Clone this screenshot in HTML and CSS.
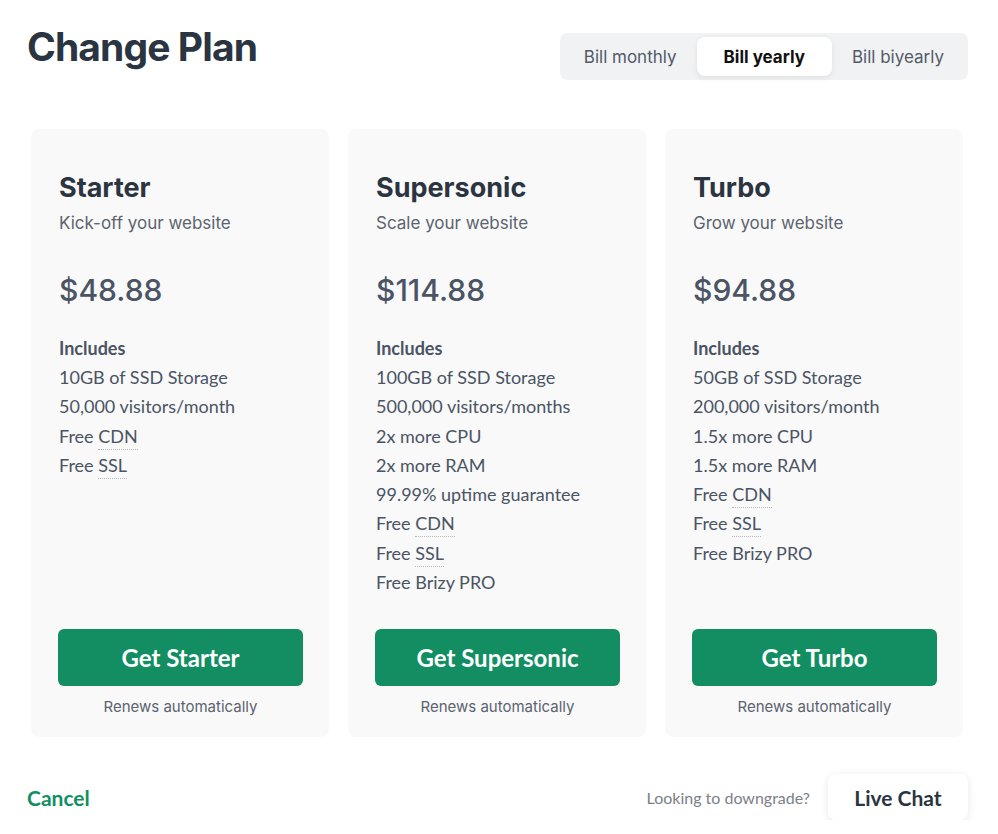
FILE: index.html
```html
<!DOCTYPE html>
<html>
<head>
    <meta charset="utf-8" />
    <meta name="viewport" content="width=device-width, initial-scale=1" />
    <title>Change Plan</title>
    <link rel="stylesheet" href="styles.css">
</head>
<body>
    <div class="page">
        <div class="header">
            <h1>Change Plan</h1>
            <div class="toggle">
                <button class="toggle-item">Bill monthly</button>
                <button class="toggle-item active">Bill yearly</button>
                <button class="toggle-item">Bill biyearly</button>
            </div>
        </div>

        <div class="cards">
            <div class="card">
                <h2>Starter</h2>
                <div class="subtitle">Kick-off your website</div>
                <div class="price">$48.88</div>
                <div class="includes">Includes</div>
                <ul class="features">
                    <li>10GB of SSD Storage</li>
                    <li>50,000 visitors/month</li>
                    <li>Free <span class="hint">CDN</span></li>
                    <li>Free <span class="hint">SSL</span></li>
                </ul>
                <button class="get">Get Starter</button>
                <div class="renews">Renews automatically</div>
            </div>

            <div class="card">
                <h2>Supersonic</h2>
                <div class="subtitle">Scale your website</div>
                <div class="price">$114.88</div>
                <div class="includes">Includes</div>
                <ul class="features">
                    <li>100GB of SSD Storage</li>
                    <li>500,000 visitors/months</li>
                    <li>2x more CPU</li>
                    <li>2x more RAM</li>
                    <li>99.99% uptime guarantee</li>
                    <li>Free <span class="hint">CDN</span></li>
                    <li>Free <span class="hint">SSL</span></li>
                    <li>Free Brizy PRO</li>
                </ul>
                <button class="get">Get Supersonic</button>
                <div class="renews">Renews automatically</div>
            </div>

            <div class="card">
                <h2>Turbo</h2>
                <div class="subtitle">Grow your website</div>
                <div class="price">$94.88</div>
                <div class="includes">Includes</div>
                <ul class="features">
                    <li>50GB of SSD Storage</li>
                    <li>200,000 visitors/month</li>
                    <li>1.5x more CPU</li>
                    <li>1.5x more RAM</li>
                    <li>Free <span class="hint">CDN</span></li>
                    <li>Free <span class="hint">SSL</span></li>
                    <li>Free Brizy PRO</li>
                </ul>
                <button class="get">Get Turbo</button>
                <div class="renews">Renews automatically</div>
            </div>
        </div>

        <div class="footer">
            <a class="cancel" href="#">Cancel</a>
            <div class="downgrade">
                <span>Looking to downgrade?</span>
                <button class="chat">Live Chat</button>
            </div>
        </div>
    </div>
</body>
</html>
```

FILE: styles.css
```css
html, body {
    margin: 0;
    background: #ffffff;
    font: 17px "Open Sans", sans-serif;
    color: #2b3441;
}

button {
    border: none;
    cursor: pointer;
}

.page {
    padding: 22px 30px 0 27px;
}

.header {
    display: flex;
    justify-content: space-between;
    align-items: flex-start;
}

h1 {
    margin: 0;
    font: 700 39px/50px Inter, sans-serif;
    letter-spacing: -0.9px;
    color: #2b3441;
}

.toggle {
    margin-top: 11px;
    display: flex;
    align-items: center;
    padding: 4px;
    background: #f1f2f4;
    border-radius: 8px;
}

.toggle-item {
    height: 39px;
    padding: 0 20px;
    background: none;
    border-radius: 8px;
    font: 17px Inter, sans-serif;
    color: #515a67;
}

.toggle-item.active {
    padding: 0 27px;
    background: #ffffff;
    font-weight: 700;
    color: #111111;
    box-shadow: 0 2px 6px rgba(0, 0, 0, 0.08);
}

.cards {
    margin: 49px 5px 0 4px;
    display: grid;
    grid-template-columns: repeat(3, 298px);
    gap: 19px;
}

.card {
    display: flex;
    flex-direction: column;
    padding: 42px 27px 20px 28px;
    background: #f9f9f9;
    border-radius: 8px;
}

h2 {
    margin: 0;
    font: 700 27px/34px Inter, sans-serif;
    color: #2b3441;
}

.subtitle {
    margin-top: 5px;
    font: 17px/26px Inter, sans-serif;
    color: #5b6370;
}

.price {
    margin-top: 32px;
    font: 500 30px/44px Inter, sans-serif;
    color: #4a5464;
}

.includes {
    margin-top: 22px;
    font: 700 18px/29px Lato, sans-serif;
    color: #4a5464;
}

.features {
    flex: 1;
    margin: 0;
    padding: 0 0 32px 0;
    list-style: none;
    font: 18px/29.3px Lato, sans-serif;
    color: #4a5464;
}

.hint {
    border-bottom: 1px dotted #b5b8bd;
    padding-bottom: 2px;
}

.get {
    width: 245px;
    height: 57px;
    margin-left: -1px;
    background: #128e62;
    border-radius: 6px;
    font: 700 24px Lato, sans-serif;
    color: #ffffff;
}

.renews {
    margin-top: 11px;
    text-align: center;
    font: 15px/20px Inter, sans-serif;
    color: #5b6370;
}

.footer {
    margin: 37px 0 0 0;
    display: flex;
    justify-content: space-between;
    align-items: center;
}

.cancel {
    font: 700 21px Lato, sans-serif;
    color: #128e62;
    text-decoration: none;
}

.downgrade {
    display: flex;
    align-items: center;
    gap: 18px;
    font: 16px Lato, sans-serif;
    color: #7b808a;
}

.chat {
    width: 140px;
    height: 46px;
    background: #ffffff;
    border-radius: 8px;
    box-shadow: 0 2px 8px rgba(0, 0, 0, 0.1);
    font: 700 21px Lato, sans-serif;
    color: #2b3441;
}
```
